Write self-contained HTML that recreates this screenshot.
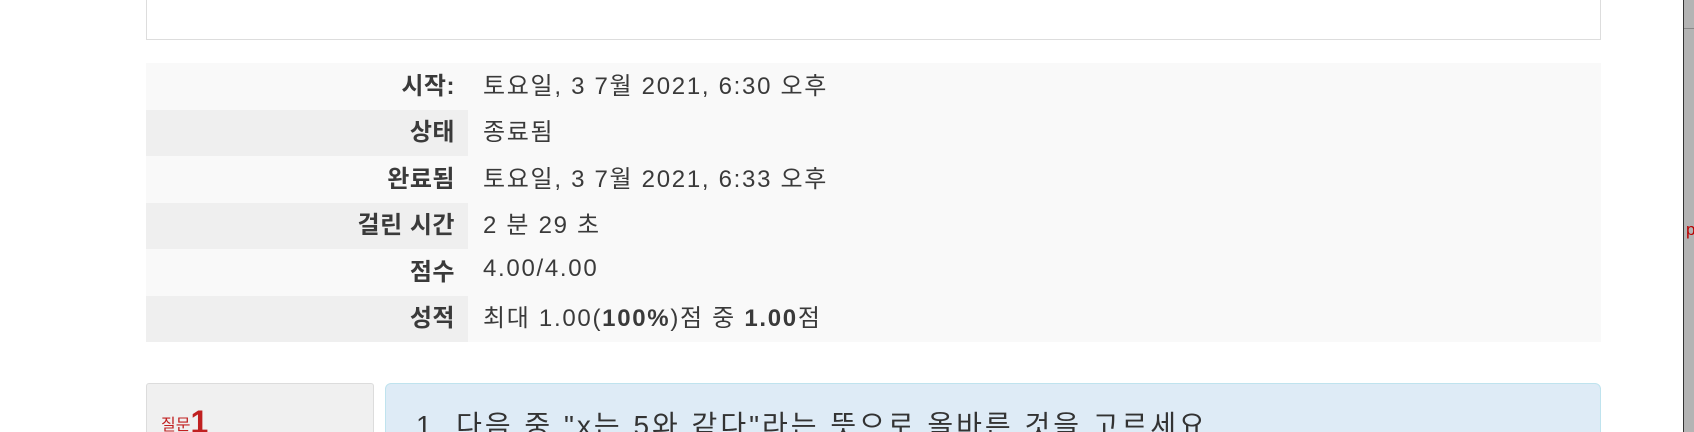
<!DOCTYPE html>
<html><head><meta charset="utf-8"><style>
html,body{margin:0;padding:0;background:#fff;width:1694px;height:432px;overflow:hidden;position:relative;font-family:"Liberation Sans","Noto Sans CJK KR",sans-serif;color:#3a3a3a}
.top{position:absolute;left:146px;top:-2px;width:1453px;height:41px;border:1px solid #ddd;border-top:none;background:#fff}
table{position:absolute;left:146px;top:63px;width:1455px;border-collapse:collapse;font-size:24px;letter-spacing:1.7px}
td{height:46.5px;padding:0 0 6px 0;background:#f9f9f9;vertical-align:middle;box-sizing:border-box}
td.l{text-align:right;font-weight:bold;padding-right:13px;width:322px;letter-spacing:0.5px}
td.v{padding-left:15px}
tr.e td.l{background:#efefef}
.qn{position:absolute;left:146px;top:383px;width:226px;height:60px;background:#f0f0f0;border:1px solid #dcdcdc;border-radius:3px}
.qn span{position:absolute;left:14px;top:20px;color:#c02020;font-size:16px}
.qn b{font-size:32px;vertical-align:-3px}
.qb{position:absolute;left:385px;top:383px;width:1214px;height:60px;background:#deebf6;border:1px solid #bfe3ee;border-radius:6px}
.qb div{position:absolute;left:30px;top:20px;font-size:28px;letter-spacing:3px;color:#333}
.sb{position:absolute;left:1683px;top:0;width:11px;height:432px;background:#b4b4b4;border-left:1px solid #333}
.sb i{position:absolute;left:2px;top:220px;color:#b00;font-style:normal;font-size:17px}
.sb em{position:absolute;left:0;top:28px;width:11px;height:1px;background:#888}
</style></head><body>
<div class="top"></div>
<table>
<tr><td class="l">시작:</td><td class="v">토요일, 3 7월 2021, 6:30 오후</td></tr>
<tr class="e"><td class="l">상태</td><td class="v">종료됨</td></tr>
<tr><td class="l">완료됨</td><td class="v">토요일, 3 7월 2021, 6:33 오후</td></tr>
<tr class="e"><td class="l">걸린 시간</td><td class="v">2 분 29 초</td></tr>
<tr><td class="l">점수</td><td class="v">4.00/4.00</td></tr>
<tr class="e"><td class="l">성적</td><td class="v">최대 1.00(<b>100%</b>)점 중 <b>1.00</b>점</td></tr>
</table>
<div class="qn"><span>질문<b>1</b></span></div>
<div class="qb"><div>1. 다음 중 "x는 5와 같다"라는 뜻으로 올바른 것을 고르세요.</div></div>
<div class="sb"><em></em><i>p</i></div>
</body></html>
